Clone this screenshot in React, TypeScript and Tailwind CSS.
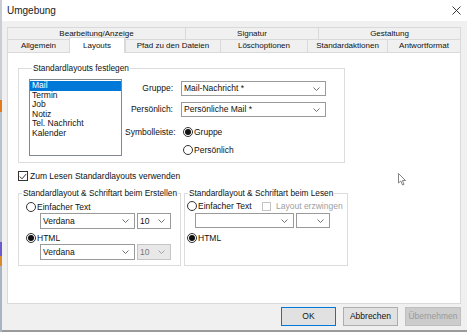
import React from 'react';

const Chevron = ({ color = '#606060' }: { color?: string }) => (
  <svg width="7" height="4" viewBox="0 0 7 4" className="shrink-0">
    <path d="M0.5 0.5 L3.5 3.5 L6.5 0.5" fill="none" stroke={color} strokeWidth="0.9" />
  </svg>
);

function Dropdown({ w, h = 16, text, disabled }: { w: number; h?: number; text?: string; disabled?: boolean }) {
  return (
    <div
      className={`flex items-center justify-between border pl-[2px] pr-[5px] ${
        disabled ? 'border-[#c4c4c4] bg-[#e8e8e8] text-[#7a7a7a]' : 'border-[#9a9a9a] bg-white text-[#111]'
      }`}
      style={{ width: w, height: h }}
    >
      <span className="leading-none">{text}</span>
      <Chevron color={disabled ? '#9a9a9a' : '#606060'} />
    </div>
  );
}

function Radio({ checked, label }: { checked?: boolean; label: string }) {
  return (
    <div className="flex h-[12px] items-center gap-[1px]">
      <div className="flex h-[10px] w-[10px] shrink-0 items-center justify-center rounded-full border border-[#333] bg-white">
        {checked && <div className="h-[6px] w-[6px] rounded-full bg-[#111]" />}
      </div>
      <span className="whitespace-nowrap leading-none">{label}</span>
    </div>
  );
}

function Group({ title, className, children }: { title: string; className: string; children: React.ReactNode }) {
  return (
    <fieldset className={`border border-[#dcdcdc] ${className}`}>
      <legend className="ml-[3px] px-[1px] leading-[10px] text-[8.3px]">{title}</legend>
      {children}
    </fieldset>
  );
}

const row1 = [
  { label: 'Bearbeitung/Anzeige', w: 178 },
  { label: 'Signatur', w: 133 },
  { label: 'Gestaltung', w: 143 },
];

const row2 = [
  { label: 'Allgemein', w: 62 },
  { label: 'Layouts', w: 56, active: true },
  { label: 'Pfad zu den Dateien', w: 95 },
  { label: 'Löschoptionen', w: 87 },
  { label: 'Standardaktionen', w: 80 },
  { label: 'Antwortformat', w: 74 },
];

const layouts = ['Mail', 'Termin', 'Job', 'Notiz', 'Tel. Nachricht', 'Kalender'];

export default function App() {
  return (
    <div
      className="relative flex h-[332px] w-[467px] overflow-hidden bg-[#f0f0f0] text-[8.5px] text-[#111]"
      style={{ fontFamily: '"Liberation Sans", Arial, sans-serif' }}
    >
      {/* desktop sliver */}
      <div className="flex w-[2px] flex-col">
        <div className="h-[100px] bg-[#c9ccd2]" />
        <div className="h-[12px] bg-[#e07a1c]" />
        <div className="h-[130px] bg-[#b8c2cf]" />
        <div className="h-[14px] bg-[#6a5acd]" />
        <div className="h-[10px] bg-[#d98b2b]" />
        <div className="flex-1 bg-[#a9b4c2]" />
      </div>

      <div className="flex flex-1 flex-col border-b-2 border-[#9a9a9a]">
        {/* title bar */}
        <div className="flex h-[21px] items-center justify-between bg-white pl-[5px] pr-[6px]">
          <span className="text-[10px] leading-none text-[#1a1a1a]">Umgebung</span>
          <svg width="9" height="9" viewBox="0 0 9 9">
            <path d="M0.5 0.5 L8.5 8.5 M8.5 0.5 L0.5 8.5" stroke="#222" strokeWidth="0.9" />
          </svg>
        </div>

        <div className="ml-[5px] mt-[6px] flex w-[454px] flex-col">
          {/* tabs */}
          <div className="flex h-[12px] text-[8px]">
            {row1.map((t, i) => (
              <div
                key={t.label}
                className={`flex items-center justify-center border-l border-t border-[#d9d9d9] leading-none ${
                  i === row1.length - 1 ? 'border-r' : ''
                }`}
                style={{ width: t.w }}
              >
                {t.label}
              </div>
            ))}
          </div>
          <div className="relative z-10 flex h-[13px] items-end text-[8px]">
            {row2.map((t, i) =>
              t.active ? (
                <div
                  key={t.label}
                  className="flex h-[16px] items-center justify-center border-x border-t border-[#d9d9d9] bg-white leading-none"
                  style={{ width: t.w, marginBottom: -1 }}
                >
                  {t.label}
                </div>
              ) : (
                <div
                  key={t.label}
                  className={`flex h-[13px] items-center justify-center border-l border-t border-[#d9d9d9] leading-none ${
                    i === row2.length - 1 ? 'border-r' : ''
                  }`}
                  style={{ width: t.w }}
                >
                  {t.label}
                </div>
              )
            )}
          </div>

          {/* panel */}
          <div className="flex h-[252px] flex-col border border-[#d9d9d9] bg-white">
            <Group title="Standardlayouts festlegen" className="ml-[10px] mt-[10px] h-[100px] w-[327px] pl-[10px]">
              <div className="flex">
                <div className="mt-[6px] h-[77px] w-[93px] border border-[#828790] bg-white pt-[1px] leading-[9.5px]">
                  {layouts.map((l, i) => (
                    <div key={l} className={`px-[2px] ${i === 0 ? 'bg-[#0078d7] text-white' : ''}`}>
                      {l}
                    </div>
                  ))}
                </div>
                <div className="ml-[3px] mt-[8px] flex flex-col">
                  <div className="flex items-center">
                    <span className="w-[48px] whitespace-nowrap text-right">Gruppe:</span>
                    <div className="ml-[8px]">
                      <Dropdown w={145} h={15} text="Mail-Nachricht *" />
                    </div>
                  </div>
                  <div className="mt-[6px] flex items-center">
                    <span className="w-[48px] whitespace-nowrap text-right">Persönlich:</span>
                    <div className="ml-[8px]">
                      <Dropdown w={145} h={15} text="Persönliche Mail *" />
                    </div>
                  </div>
                  <div className="mt-[9px] flex items-center">
                    <span className="w-[48px] whitespace-nowrap text-right">Symbolleiste:</span>
                    <div className="ml-[10px]">
                      <Radio checked label="Gruppe" />
                    </div>
                  </div>
                  <div className="ml-[58px] mt-[5px]">
                    <Radio label="Persönlich" />
                  </div>
                </div>
              </div>
            </Group>

            <div className="ml-[10px] mt-[8px] flex items-center gap-[2px]">
              <div className="flex h-[10px] w-[10px] items-center justify-center border border-[#333] bg-white">
                <svg width="8" height="7" viewBox="0 0 8 7">
                  <path d="M0.8 3.6 L3 5.8 L7.2 1" fill="none" stroke="#222" strokeWidth="0.9" />
                </svg>
              </div>
              <span className="leading-none">Zum Lesen Standardlayouts verwenden</span>
            </div>

            <div className="ml-[10px] mt-[7px] flex gap-[3px]">
              <Group title="Standardlayout & Schriftart beim Erstellen" className="h-[78px] w-[163px]">
                <div className="mt-[3px] pl-[7px]">
                  <Radio label="Einfacher Text" />
                </div>
                <div className="flex gap-[2px] pl-[21px]">
                  <Dropdown w={95} text="Verdana" />
                  <Dropdown w={34} text="10" />
                </div>
                <div className="mt-[3px] pl-[7px]">
                  <Radio checked label="HTML" />
                </div>
                <div className="flex gap-[2px] pl-[21px]">
                  <Dropdown w={95} text="Verdana" />
                  <Dropdown w={34} text="10" disabled />
                </div>
              </Group>
              <Group title="Standardlayout & Schriftart beim Lesen" className="h-[78px] w-[164px]">
                <div className="mt-[2px] flex items-center pl-[2px]">
                  <div className="w-[75px]">
                    <Radio label="Einfacher Text" />
                  </div>
                  <div className="h-[9px] w-[9px] border border-[#c4c4c4] bg-white" />
                  <span className="ml-[5px] whitespace-nowrap leading-none text-[#a0a0a0]">Layout erzwingen</span>
                </div>
                <div className="mt-[1px] flex gap-[2px] pl-[10px]">
                  <Dropdown w={99} h={15} />
                  <Dropdown w={34} h={15} />
                </div>
                <div className="mt-[4px] pl-[2px]">
                  <Radio checked label="HTML" />
                </div>
              </Group>
            </div>
          </div>

          {/* buttons */}
          <div className="mt-[3px] flex justify-end gap-[6px]">
            <button className="h-[19px] w-[55px] border border-[#0078d7] bg-[#e1e1e1] leading-none">OK</button>
            <button className="ml-[1px] h-[19px] w-[55px] border border-[#adadad] bg-[#e1e1e1] leading-none">
              Abbrechen
            </button>
            <button className="ml-[1px] h-[19px] w-[56px] border border-[#bfbfbf] bg-[#cccccc] leading-none text-[#9a9a9a]">
              Übernehmen
            </button>
          </div>
        </div>
      </div>

      {/* mouse cursor */}
      <svg className="absolute left-[398px] top-[173px]" width="9" height="13" viewBox="0 0 9 13">
        <path d="M0.5 0.5 L0.5 10 L2.8 8 L4.5 12 L6 11.3 L4.4 7.5 L7.5 7.5 Z" fill="#fff" stroke="#777" strokeWidth="0.9" />
      </svg>
    </div>
  );
}
